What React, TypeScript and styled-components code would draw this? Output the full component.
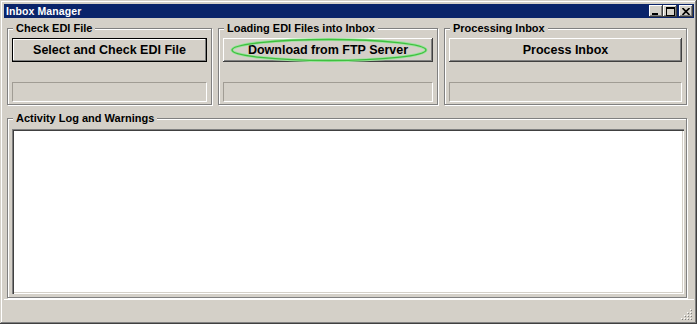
import React from 'react';
import styled, { createGlobalStyle } from 'styled-components';

const GlobalStyle = createGlobalStyle`
  html, body {
    margin: 0;
    padding: 0;
    background: #d4d0c8;
    overflow: hidden;
  }
  body {
    font-family: "Liberation Sans", Arial, sans-serif;
  }
`;

const Window = styled.div`
  box-sizing: border-box;
  width: 697px;
  height: 324px;
  display: flex;
  flex-direction: column;
  padding: 4px 3px 2px 4px;
  background: #d4d0c8;
  box-shadow: inset -1px -1px #404040, inset 1px 1px #d4d0c8,
    inset -2px -2px #808080, inset 2px 2px #ffffff;
`;

const TitleBar = styled.div`
  height: 14px;
  display: flex;
  align-items: center;
  background: #0a246a;
  padding: 0 1px 0 2px;
`;

const Title = styled.span`
  color: #ffffff;
  font-weight: bold;
  font-size: 10.5px;
  line-height: 14px;
  letter-spacing: 0.1px;
`;

const Controls = styled.div`
  margin-left: auto;
  display: flex;
  align-items: center;
`;

const ControlButton = styled.div<{ $gap?: boolean }>`
  width: 14px;
  height: 12px;
  margin-left: ${({ $gap }) => ($gap ? '2px' : '0')};
  background: #d4d0c8;
  display: flex;
  align-items: center;
  justify-content: center;
  box-shadow: inset -1px -1px #404040, inset 1px 1px #ffffff,
    inset -2px -2px #808080;
`;

const Client = styled.div`
  flex: 1;
  display: flex;
  flex-direction: column;
  padding: 4px 7px 0 3px;
`;

const TopRow = styled.div`
  display: grid;
  grid-template-columns: 205px 220px 1fr;
  column-gap: 6px;
`;

const Group = styled.fieldset<{ $log?: boolean }>`
  margin: ${({ $log }) => ($log ? '7px 0 0 0' : '0')};
  padding: ${({ $log }) => ($log ? '5px 2px 3px 4px' : '4px 4px 2px 4px')};
  min-width: 0;
  border: 1px solid #808080;
  box-shadow: inset 1px 1px #ffffff, 1px 1px #ffffff;
`;

const Legend = styled.legend`
  margin-left: 1px;
  padding: 0 3px;
  background: #d4d0c8;
  font-size: 11px;
  font-weight: bold;
  line-height: 12px;
  color: #000000;
`;

const ButtonWrap = styled.div`
  position: relative;
`;

const PushButton = styled.button<{ $default?: boolean }>`
  display: flex;
  align-items: center;
  justify-content: center;
  width: 100%;
  height: 24px;
  margin: 0;
  padding: 0;
  border: none;
  background: #d4d0c8;
  color: #000000;
  font-family: "Liberation Sans", Arial, sans-serif;
  font-size: 12.5px;
  font-weight: bold;
  box-shadow: ${({ $default }) =>
    $default
      ? 'inset 0 0 0 1px #000000, inset -2px -2px #808080, inset 2px 2px #ffffff'
      : 'inset -1px -1px #404040, inset 1px 1px #ffffff, inset -2px -2px #808080'};
`;

const Highlight = styled.svg`
  position: absolute;
  left: 8px;
  top: 0;
  width: calc(100% - 14px);
  height: 24px;
  pointer-events: none;
  overflow: visible;
`;

const Field = styled.div`
  box-sizing: border-box;
  height: 20px;
  margin-top: 20px;
  border: 1px solid;
  border-color: #a09c94 #ffffff #ffffff #a09c94;
`;

const LogArea = styled.textarea`
  display: block;
  box-sizing: border-box;
  width: 100%;
  height: 165px;
  margin: 0;
  resize: none;
  border: none;
  outline: none;
  background: #ffffff;
  box-shadow: inset 1px 1px #808080, inset 2px 2px #404040,
    inset -1px -1px #ffffff, inset -2px -2px #d4d0c8;
`;

const StatusBar = styled.div`
  height: 20px;
  display: flex;
  justify-content: flex-end;
  align-items: flex-end;
  border-top: 1px solid #ffffff;
  padding: 0 2px 2px 0;
`;

const MinIcon = () => (
  <svg width="8" height="7" viewBox="0 0 8 7">
    <rect x="0" y="5" width="6" height="2" fill="#000" />
  </svg>
);

const MaxIcon = () => (
  <svg width="9" height="9" viewBox="0 0 9 9">
    <rect x="0.5" y="1" width="8" height="7.5" fill="none" stroke="#000" strokeWidth="1" />
    <rect x="0" y="0" width="9" height="2" fill="#000" />
  </svg>
);

const CloseIcon = () => (
  <svg width="8" height="7" viewBox="0 0 8 7">
    <path d="M0.5 0 L7.5 7 M7.5 0 L0.5 7" stroke="#000" strokeWidth="1.6" />
  </svg>
);

const SizeGrip = () => (
  <svg width="11" height="11" viewBox="0 0 11 11">
    {[
      [9, 0],
      [6, 3], [9, 3],
      [3, 6], [6, 6], [9, 6],
      [0, 9], [3, 9], [6, 9], [9, 9],
    ].map(([x, y]) => (
      <g key={`${x}-${y}`}>
        <rect x={x} y={y} width="1" height="1" fill="#ffffff" />
        <rect x={x + 1} y={y + 1} width="1" height="1" fill="#808080" />
      </g>
    ))}
  </svg>
);

const App: React.FC = () => {
  return (
    <>
      <GlobalStyle />
      <Window>
        <TitleBar>
          <Title>Inbox Manager</Title>
          <Controls>
            <ControlButton><MinIcon /></ControlButton>
            <ControlButton><MaxIcon /></ControlButton>
            <ControlButton $gap><CloseIcon /></ControlButton>
          </Controls>
        </TitleBar>

        <Client>
          <TopRow>
            <Group>
              <Legend>Check EDI File</Legend>
              <PushButton $default>Select and Check EDI File</PushButton>
              <Field />
            </Group>

            <Group>
              <Legend>Loading EDI Files into Inbox</Legend>
              <ButtonWrap>
                <PushButton>Download from FTP Server</PushButton>
                <Highlight viewBox="0 0 194 24" preserveAspectRatio="none">
                  <ellipse cx="97" cy="12" rx="96" ry="10.5" fill="none" stroke="#9be39b" strokeWidth="3" />
                  <ellipse cx="97" cy="12" rx="96" ry="10.5" fill="none" stroke="#3fbf3f" strokeWidth="1.3" />
                </Highlight>
              </ButtonWrap>
              <Field />
            </Group>

            <Group>
              <Legend>Processing Inbox</Legend>
              <PushButton>Process Inbox</PushButton>
              <Field />
            </Group>
          </TopRow>

          <Group $log>
            <Legend>Activity Log and Warnings</Legend>
            <LogArea readOnly />
          </Group>
        </Client>

        <StatusBar>
          <SizeGrip />
        </StatusBar>
      </Window>
    </>
  );
};

export default App;
